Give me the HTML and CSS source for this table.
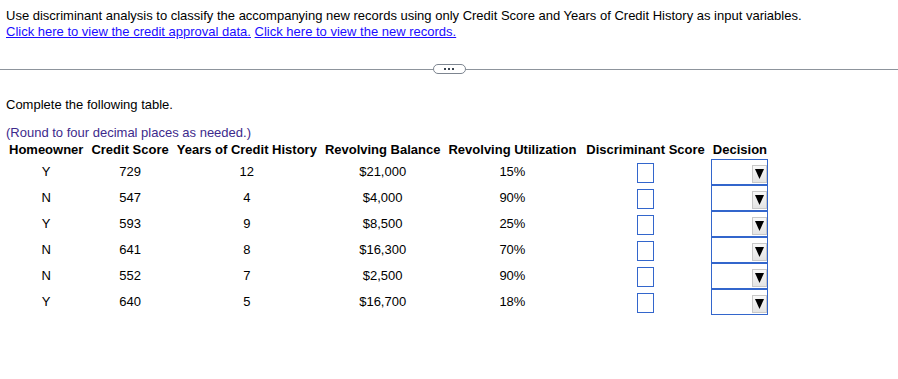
FILE: index.html
```html
<!DOCTYPE html>
<html>
<head>
<meta charset="utf-8">
<link rel="stylesheet" href="styles.css">
</head>
<body>
<div class="intro">
  <p class="q">Use discriminant analysis to classify the accompanying new records using only Credit Score and Years of Credit History as input variables.</p>
  <p class="links"><a href="#">Click here to view the credit approval data.</a> <a href="#">Click here to view the new records.</a></p>
</div>
<div class="divider">
  <span class="line"></span>
  <span class="pill"><span class="dot"></span><span class="dot"></span><span class="dot"></span></span>
  <span class="line"></span>
</div>
<div class="work">
  <p class="task">Complete the following table.</p>
  <p class="note">(Round to four decimal places as needed.)</p>
  <table class="grid">
    <thead>
      <tr>
        <th>Homeowner</th><th>Credit Score</th><th>Years of Credit History</th><th>Revolving Balance</th><th>Revolving Utilization</th><th class="ds">Discriminant Score</th><th>Decision</th>
      </tr>
    </thead>
    <tbody>
      <tr><td>Y</td><td>729</td><td>12</td><td>$21,000</td><td>15%</td><td class="ds"><span class="box"></span></td><td class="dec"><span class="sel"><span class="btn"><svg width="9" height="10" viewBox="0 0 9 10"><path d="M0 0H9L4.5 10Z" fill="#000"/></svg></span></span></td></tr>
      <tr><td>N</td><td>547</td><td>4</td><td>$4,000</td><td>90%</td><td class="ds"><span class="box"></span></td><td class="dec"><span class="sel"><span class="btn"><svg width="9" height="10" viewBox="0 0 9 10"><path d="M0 0H9L4.5 10Z" fill="#000"/></svg></span></span></td></tr>
      <tr><td>Y</td><td>593</td><td>9</td><td>$8,500</td><td>25%</td><td class="ds"><span class="box"></span></td><td class="dec"><span class="sel"><span class="btn"><svg width="9" height="10" viewBox="0 0 9 10"><path d="M0 0H9L4.5 10Z" fill="#000"/></svg></span></span></td></tr>
      <tr><td>N</td><td>641</td><td>8</td><td>$16,300</td><td>70%</td><td class="ds"><span class="box"></span></td><td class="dec"><span class="sel"><span class="btn"><svg width="9" height="10" viewBox="0 0 9 10"><path d="M0 0H9L4.5 10Z" fill="#000"/></svg></span></span></td></tr>
      <tr><td>N</td><td>552</td><td>7</td><td>$2,500</td><td>90%</td><td class="ds"><span class="box"></span></td><td class="dec"><span class="sel"><span class="btn"><svg width="9" height="10" viewBox="0 0 9 10"><path d="M0 0H9L4.5 10Z" fill="#000"/></svg></span></span></td></tr>
      <tr><td>Y</td><td>640</td><td>5</td><td>$16,700</td><td>18%</td><td class="ds"><span class="box"></span></td><td class="dec"><span class="sel"><span class="btn"><svg width="9" height="10" viewBox="0 0 9 10"><path d="M0 0H9L4.5 10Z" fill="#000"/></svg></span></span></td></tr>
    </tbody>
  </table>
</div>
</body>
</html>
```
FILE: styles.css
```css
html, body {
  margin: 0;
  padding: 0;
  background: #fff;
}
body {
  font-family: "Liberation Sans", Arial, sans-serif;
  font-size: 13px;
  color: #000;
}
p {
  margin: 0;
}
.intro {
  padding: 8px 6px 0 6px;
}
.q, .links {
  line-height: 16px;
}
.links a {
  color: #1a0dff;
  text-decoration: underline;
}
.divider {
  display: flex;
  align-items: center;
  margin-top: 24px;
  height: 10px;
}
.line {
  flex: 1;
  height: 1px;
  background: #8d949c;
}
.pill {
  width: 31px;
  height: 8px;
  border: 1px solid #7d8590;
  border-radius: 5px;
  display: flex;
  justify-content: center;
  align-items: center;
  gap: 2px;
  background: #fff;
}
.dot {
  width: 2px;
  height: 2px;
  background: #3b4450;
}
.work {
  padding: 0 6px;
}
.task {
  margin-top: 23px;
  line-height: 16px;
}
.note {
  margin-top: 12px;
  line-height: 16px;
  color: #3d2a8c;
}
.grid {
  border-collapse: collapse;
  margin-top: 1px;
  margin-left: -1px;
}
.grid th {
  font-size: 13px;
  font-weight: bold;
  padding: 0 4px;
  height: 17px;
  line-height: 16px;
  vertical-align: top;
  white-space: nowrap;
}
.grid th.ds {
  padding-left: 6px;
}
.grid td {
  text-align: center;
  padding: 0 4px;
  height: 26px;
  line-height: 26px;
  vertical-align: middle;
}
.grid td.ds {
  padding-left: 6px;
}
.box {
  display: inline-block;
  width: 17px;
  height: 20px;
  box-sizing: border-box;
  border: 1px solid #3366cc;
  vertical-align: middle;
}
.grid td.dec {
  padding: 0 0 0 2px;
  text-align: left;
}
.sel {
  display: flex;
  justify-content: flex-end;
  align-items: flex-end;
  box-sizing: border-box;
  width: 57px;
  height: 26px;
  border: 1px solid #3366cc;
  padding: 0 0 1px 0;
}
.btn {
  width: 15px;
  height: 18px;
  box-sizing: border-box;
  background: linear-gradient(#f8f8f8, #e4e4e4);
  border: 1px solid #c8c8c8;
  display: flex;
  justify-content: center;
  align-items: center;
}
.btn svg {
  display: block;
}
```
